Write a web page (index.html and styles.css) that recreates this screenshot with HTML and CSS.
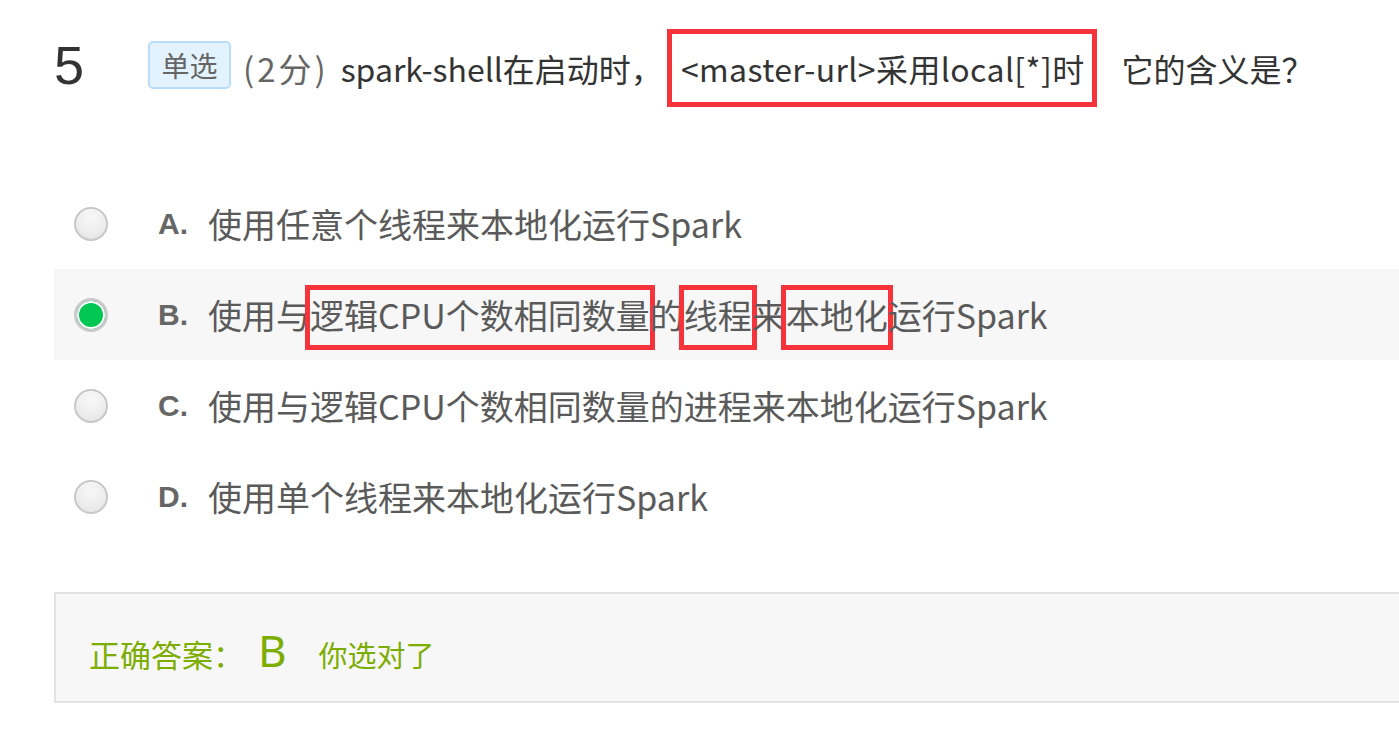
FILE: index.html
```html
<!DOCTYPE html>
<html lang="zh-CN">
<head>
<meta charset="utf-8">
<title>单选题</title>
<link rel="stylesheet" href="styles.css">
</head>
<body>
<div class="question">
  <div class="q-head">
    <span class="q-num">5</span>
    <span class="q-type">单选</span>
    <span class="q-score">(2分)</span>
    <span class="q-text">spark-shell在启动时，<span class="mark-box">&lt;master-url&gt;采用local[*]时</span>它的含义是？</span>
  </div>

  <ul class="options">
    <li class="option">
      <span class="radio"></span>
      <span class="opt-letter">A.</span>
      <span class="opt-text">使用任意个线程来本地化运行Spark</span>
    </li>
    <li class="option option-checked">
      <span class="radio radio-on"></span>
      <span class="opt-letter">B.</span>
      <span class="opt-text">使用与<span class="hl">逻辑CPU个数相同数量</span>的<span class="hl">线程</span>来<span class="hl">本地化</span>运行Spark</span>
    </li>
    <li class="option">
      <span class="radio"></span>
      <span class="opt-letter">C.</span>
      <span class="opt-text">使用与逻辑CPU个数相同数量的进程来本地化运行Spark</span>
    </li>
    <li class="option">
      <span class="radio"></span>
      <span class="opt-letter">D.</span>
      <span class="opt-text">使用单个线程来本地化运行Spark</span>
    </li>
  </ul>

  <div class="answer">
    <span class="ans-label">正确答案：</span>
    <span class="ans-key">B</span>
    <span class="ans-note">你选对了</span>
  </div>
</div>
</body>
</html>
```

FILE: styles.css
```css
html, body {
  margin: 0;
  padding: 0;
  background: #ffffff;
  overflow: hidden;
}

body {
  font-family: "Noto Sans CJK SC", "Noto Sans", sans-serif;
  color: #333;
}

.question {
  padding-left: 54px;
  width: 1360px;
}

.q-head {
  display: flex;
  align-items: center;
  height: 78px;
  margin-top: 29px;
}

.q-num {
  font-family: "Liberation Sans", Arial, sans-serif;
  font-size: 54px;
  color: #333;
  width: 94px;
  line-height: 1;
  margin-top: -6px;
}

.q-type {
  display: inline-flex;
  align-items: center;
  justify-content: center;
  box-sizing: border-box;
  width: 83px;
  height: 48px;
  border: 2px solid #b9ddf8;
  border-radius: 5px;
  background: #e2f3ff;
  color: #666;
  font-size: 28px;
  margin-right: 12px;
  margin-top: -6px;
}

.q-score {
  font-size: 33px;
  letter-spacing: 3px;
  color: #666;
  margin-right: 12px;
}

.q-text {
  font-size: 32px;
  color: #333;
  display: inline-flex;
  align-items: center;
}

.mark-box {
  display: inline-block;
  box-sizing: border-box;
  height: 78px;
  line-height: 68px;
  border: 5px solid #f6333b;
  padding: 0 7px 0 9px;
  letter-spacing: 0.4px;
  margin: 0 25px 0 4px;
}

.options {
  list-style: none;
  margin: 71px 0 0 0;
  padding: 0;
}

.option {
  display: flex;
  align-items: center;
  height: 91px;
}

.option-checked {
  background: #f7f7f7;
}

.radio {
  box-sizing: border-box;
  width: 34px;
  height: 34px;
  border-radius: 50%;
  margin-left: 20px;
  margin-right: 50px;
  border: 2px solid #c8c8c8;
  background: radial-gradient(circle at 50% 30%, #f8f8f8 0%, #ececec 60%, #e2e2e2 100%);
  box-shadow: inset 0 1px 1px rgba(255, 255, 255, 0.8);
}

.radio-on {
  border: 3px solid #c9c9c9;
  background: #00c752;
  box-shadow: inset 0 0 0 2px #ffffff;
}

.opt-letter {
  font-family: "Liberation Sans", Arial, sans-serif;
  font-weight: bold;
  font-size: 30px;
  color: #666;
  width: 50px;
}

.opt-text {
  font-size: 34px;
  color: #5a5a5a;
}

.hl {
  border: 5px solid #f6333b;
  padding: 0 0 6px 0;
  margin: 0 -5px;
}

.answer {
  box-sizing: border-box;
  margin-top: 50px;
  height: 111px;
  width: 1360px;
  border: 2px solid #e2e2e2;
  background: #f7f7f7;
  display: flex;
  align-items: baseline;
  padding: 26px 0 0 33px;
  color: #7cad00;
}

.ans-label {
  font-size: 31px;
}

.ans-key {
  font-family: "Noto Sans", sans-serif;
  font-size: 44px;
  margin: 0 32px 0 14px;
}

.ans-note {
  font-size: 29px;
}
```
